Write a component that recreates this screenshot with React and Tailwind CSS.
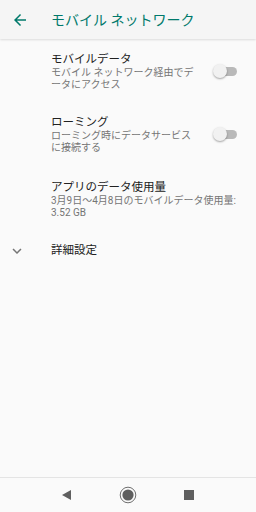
const font = { fontFamily: 'Roboto, "Noto Sans CJK JP", sans-serif' }

function Toggle() {
  return (
    <div className="relative h-[14px] w-[24px] shrink-0">
      <div className="absolute left-[5px] top-[3px] h-[9px] w-[19px] rounded-full bg-[#b9b9b9]" />
      <div className="absolute left-0 top-0 h-[14px] w-[14px] rounded-full bg-[#f1f1f1] shadow-[0_1px_2px_rgba(0,0,0,0.35)]" />
    </div>
  )
}

function Item({ title, lines, toggle, top = "pt-[12px]", bottom = "pb-[11px]" }) {
  return (
    <div className={`flex items-center ${top} ${bottom} pl-[51px] pr-[19px]`}>
      <div className="flex-1">
        <div className="text-[11.5px] leading-[16px] text-[#212121]">{title}</div>
        {lines.map((l) => (
          <div key={l} className="text-[10px] leading-[12px] text-[#757575]">
            {l}
          </div>
        ))}
      </div>
      {toggle && <Toggle />}
    </div>
  )
}

export default function App() {
  return (
    <div className="flex h-[512px] w-[256px] flex-col bg-[#fafafa]" style={font}>
      <header className="relative z-10 flex h-[39px] shrink-0 items-center bg-[#f5f5f5] pt-[1px] shadow-[0_1px_2px_rgba(0,0,0,0.12)]">
        <svg className="ml-[11px]" width="18" height="18" viewBox="0 0 24 24">
          <path d="M20 11H7.83l5.59-5.59L12 4l-8 8 8 8 1.41-1.41L7.83 13H20v-2z" fill="#00796b" />
        </svg>
        <h1 className="ml-[22px] text-[14px] text-[#00796b]">モバイル ネットワーク</h1>
      </header>

      <main className="flex-1">
        <Item
          title="モバイルデータ"
          lines={["モバイル ネットワーク経由でデ", "ータにアクセス"]}
          toggle
        />
        <Item
          title="ローミング"
          lines={["ローミング時にデータサービス", "に接続する"]}
          toggle
        />
        <Item
          title="アプリのデータ使用量"
          lines={["3月9日〜4月8日のモバイルデータ使用量:", "3.52 GB"]}
          top="pt-[13.5px]"
          bottom="pb-[10px]"
        />
        <div className="flex h-[44px] items-center">
          <svg className="ml-[8px]" width="18" height="18" viewBox="0 0 24 24">
            <path d="M16.59 8.59 12 13.17 7.41 8.59 6 10l6 6 6-6z" fill="#757575" />
          </svg>
          <span className="ml-[25px] text-[11.5px] text-[#212121]">詳細設定</span>
        </div>
      </main>

      <nav className="flex h-[35px] shrink-0 items-center justify-center border-t border-[#e4e4e4] bg-[#fafafa]">
        <svg width="9" height="10" viewBox="0 0 9 10">
          <path d="M9 0v10L0 5z" fill="#5f5f5f" />
        </svg>
        <svg className="ml-[48px]" width="18" height="18" viewBox="0 0 18 18">
          <circle cx="9" cy="9" r="7.8" fill="none" stroke="#5f5f5f" strokeWidth="0.9" />
          <circle cx="9" cy="9" r="5.6" fill="#5f5f5f" />
        </svg>
        <div className="ml-[47px] h-[10px] w-[10px] bg-[#5f5f5f]" />
      </nav>
    </div>
  )
}
